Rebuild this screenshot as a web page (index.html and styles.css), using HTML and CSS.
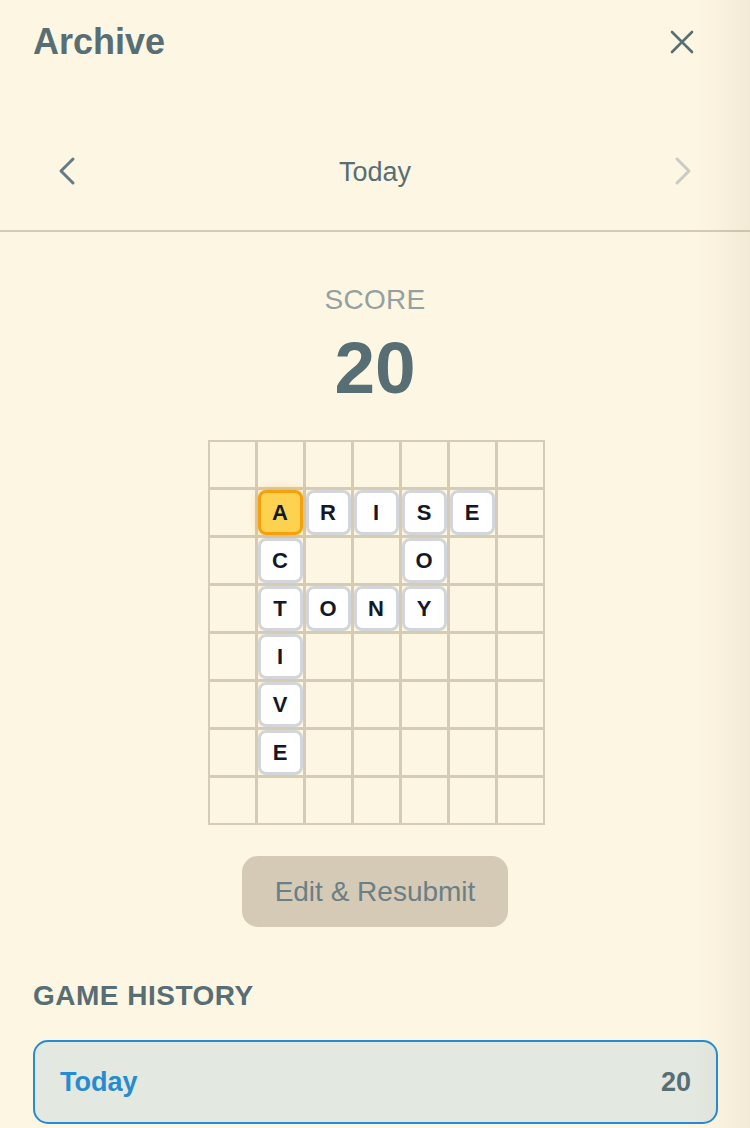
FILE: index.html
```html
<!DOCTYPE html>
<html lang="en">
<head>
<meta charset="utf-8">
<title>Archive</title>
<link rel="stylesheet" href="styles.css">
</head>
<body>
<div class="panel">
  <header class="header">
    <h1 class="title">Archive</h1>
    <button class="close" aria-label="Close">
      <svg width="24" height="24" viewBox="0 0 24 24"><path d="M2 2 L22 22 M22 2 L2 22" fill="none" stroke="currentColor" stroke-width="2.6" stroke-linecap="round"/></svg>
    </button>
  </header>

  <nav class="datenav">
    <button class="chev" aria-label="Previous">
      <svg width="32" height="32" viewBox="0 0 32 32"><path d="M22 4 L10 16 L22 28" fill="none" stroke="currentColor" stroke-width="3" stroke-linecap="round" stroke-linejoin="round"/></svg>
    </button>
    <span class="date">Today</span>
    <button class="chev disabled" aria-label="Next">
      <svg width="32" height="32" viewBox="0 0 32 32"><path d="M10 4 L22 16 L10 28" fill="none" stroke="currentColor" stroke-width="3" stroke-linecap="round" stroke-linejoin="round"/></svg>
    </button>
  </nav>

  <section class="scorebox">
    <div class="score-label">SCORE</div>
    <div class="score-value">20</div>

    <div class="board">
      <div class="cell"></div><div class="cell"></div><div class="cell"></div><div class="cell"></div><div class="cell"></div><div class="cell"></div><div class="cell"></div>
      <div class="cell"></div><div class="cell"><span class="tile start">A</span></div><div class="cell"><span class="tile">R</span></div><div class="cell"><span class="tile">I</span></div><div class="cell"><span class="tile">S</span></div><div class="cell"><span class="tile">E</span></div><div class="cell"></div>
      <div class="cell"></div><div class="cell"><span class="tile">C</span></div><div class="cell"></div><div class="cell"></div><div class="cell"><span class="tile">O</span></div><div class="cell"></div><div class="cell"></div>
      <div class="cell"></div><div class="cell"><span class="tile">T</span></div><div class="cell"><span class="tile">O</span></div><div class="cell"><span class="tile">N</span></div><div class="cell"><span class="tile">Y</span></div><div class="cell"></div><div class="cell"></div>
      <div class="cell"></div><div class="cell"><span class="tile">I</span></div><div class="cell"></div><div class="cell"></div><div class="cell"></div><div class="cell"></div><div class="cell"></div>
      <div class="cell"></div><div class="cell"><span class="tile">V</span></div><div class="cell"></div><div class="cell"></div><div class="cell"></div><div class="cell"></div><div class="cell"></div>
      <div class="cell"></div><div class="cell"><span class="tile">E</span></div><div class="cell"></div><div class="cell"></div><div class="cell"></div><div class="cell"></div><div class="cell"></div>
      <div class="cell"></div><div class="cell"></div><div class="cell"></div><div class="cell"></div><div class="cell"></div><div class="cell"></div><div class="cell"></div>
    </div>

    <button class="resubmit">Edit &amp; Resubmit</button>
  </section>

  <section class="history">
    <h2 class="history-title">GAME HISTORY</h2>
    <div class="history-item active">
      <span class="history-date">Today</span>
      <span class="history-score">20</span>
    </div>
  </section>
</div>
<div class="edge-shade"></div>
</body>
</html>
```

FILE: styles.css
```css
* { box-sizing: border-box; }

html, body {
  margin: 0;
  padding: 0;
  background: #fdf6e3;
}

body {
  font-family: "Liberation Sans", Arial, sans-serif;
  color: #586e75;
  height: 1128px;
  overflow: hidden;
}

button {
  font-family: inherit;
  background: none;
  border: 0;
  padding: 0;
  margin: 0;
  cursor: pointer;
}

.header {
  display: flex;
  align-items: flex-start;
  justify-content: space-between;
  padding: 21px 56px 0 33px;
  height: 60px;
}

.title {
  margin: 0;
  font-size: 36px;
  line-height: 42px;
  font-weight: 700;
  color: #586e75;
}

.close {
  display: flex;
  color: #586e75;
  margin-top: 9px;
}

.datenav {
  display: flex;
  align-items: center;
  justify-content: space-between;
  height: 172px;
  padding: 81px 51px 29px 51px;
  border-bottom: 2px solid #d5cab6;
}

.chev {
  display: flex;
  color: #657b83;
  width: 32px;
  height: 32px;
}

.chev.disabled {
  color: #c9cbc4;
}

.date {
  font-size: 27px;
  line-height: 32px;
  color: #586e75;
  padding-top: 2px;
}

.scorebox {
  display: flex;
  flex-direction: column;
  align-items: center;
  padding-top: 52px;
}

.score-label {
  font-size: 28px;
  line-height: 32px;
  color: #93a1a1;
  letter-spacing: 0.3px;
}

.score-value {
  margin-top: 16px;
  font-size: 73px;
  line-height: 72px;
  font-weight: 700;
  color: #586e75;
}

.board {
  margin-top: 36px;
  display: grid;
  grid-template-columns: repeat(7, 45px);
  grid-template-rows: repeat(8, 45px);
  gap: 3px;
  padding: 2px;
  background: #d6cbb5;
  transform: translateX(1px);
}

.cell {
  background: #fdf6e3;
  display: flex;
}

.tile {
  flex: 1;
  display: flex;
  align-items: center;
  justify-content: center;
  background: #ffffff;
  border: 3px solid #d2d5da;
  border-radius: 8px;
  font-size: 22px;
  font-weight: 700;
  color: #141826;
  padding-top: 1px;
}

.tile.start {
  background: #fdd250;
  border-color: #f5a00d;
  box-shadow: 0 0 8px rgba(245, 160, 13, 0.45);
}

.resubmit {
  margin-top: 31px;
  height: 71px;
  padding: 0 33px;
  border-radius: 16px;
  background: #d5cab6;
  color: #6b7f86;
  font-size: 28px;
  line-height: 32px;
}

.history {
  padding: 53px 32px 0 33px;
}

.history-title {
  margin: 0;
  font-size: 28px;
  line-height: 32px;
  font-weight: 700;
  letter-spacing: 0.5px;
  color: #586e75;
}

.history-item {
  margin-top: 28px;
  display: flex;
  align-items: center;
  justify-content: space-between;
  height: 84px;
  padding: 0 25px 0 25px;
  border: 2px solid #268bd2;
  border-radius: 15px;
  background: #e3e8e0;
}

.history-date {
  font-size: 27px;
  font-weight: 700;
  color: #268bd2;
}

.history-score {
  font-size: 27px;
  font-weight: 700;
  color: #586e75;
}

.edge-shade {
  position: fixed;
  top: 0;
  right: 0;
  bottom: 0;
  width: 58px;
  pointer-events: none;
  background: linear-gradient(to right, rgba(120, 100, 60, 0) 0%, rgba(120, 100, 60, 0.025) 40%, rgba(120, 100, 60, 0.075) 100%);
}
```
